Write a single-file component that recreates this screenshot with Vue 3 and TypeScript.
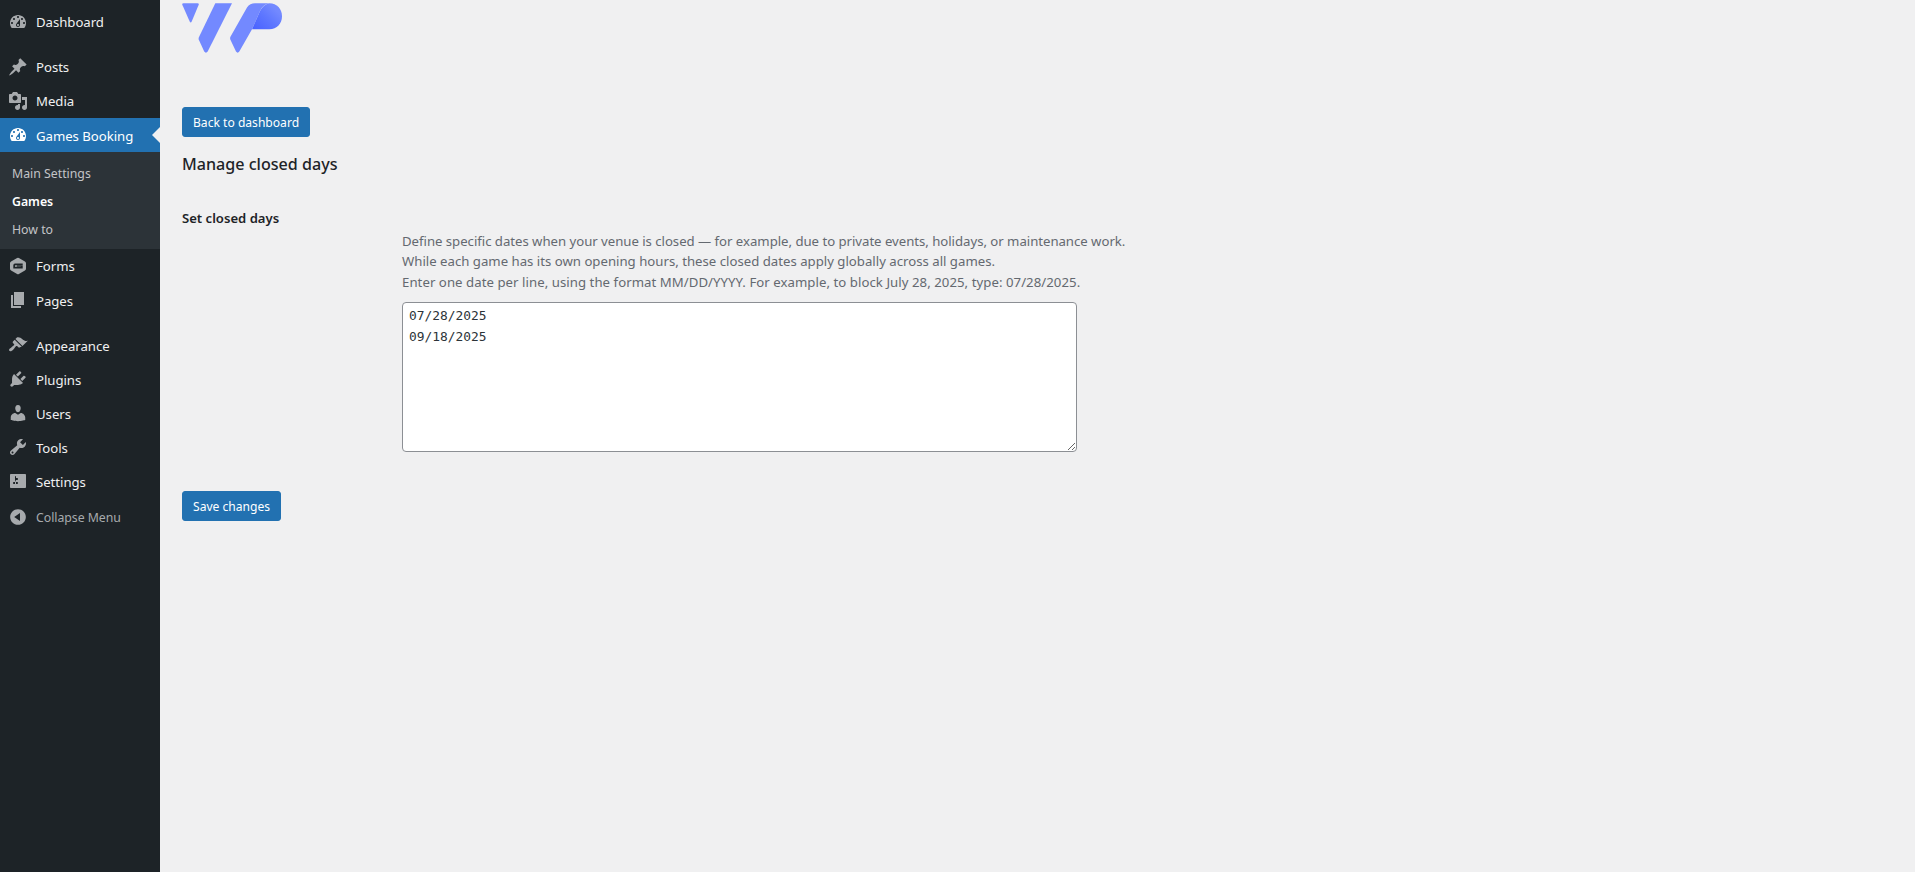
<script setup lang="ts">
interface MenuItem { label: string; path: string }
const dashboard = "M3.76 16h12.48c1.1-1.37 1.76-3.11 1.76-5 0-4.42-3.58-8-8-8s-8 3.58-8 8c0 1.89.66 3.63 1.76 5zM10 4c.55 0 1 .45 1 1s-.45 1-1 1-1-.45-1-1 .45-1 1-1zM6 6c.55 0 1 .45 1 1s-.45 1-1 1-1-.45-1-1 .45-1 1-1zm8 0c.55 0 1 .45 1 1s-.45 1-1 1-1-.45-1-1 .45-1 1-1zm-5.37 5.55L12 7v6c0 1.1-.9 2-2 2s-2-.9-2-2c0-.57.24-1.08.63-1.45zM4 10c.55 0 1 .45 1 1s-.45 1-1 1-1-.45-1-1 .45-1 1-1zm12 0c.55 0 1 .45 1 1s-.45 1-1 1-1-.45-1-1 .45-1 1-1zm-5 3c0-.55-.45-1-1-1s-1 .45-1 1 .45 1 1 1 1-.45 1-1z"
const groupA: MenuItem[] = [
  { label: 'Posts', path: 'M10.44 3.02l1.82-1.82 6.36 6.35-1.83 1.82c-1.05-.68-2.48-.57-3.41.36l-.75.75c-.92.93-1.04 2.35-.35 3.41l-1.83 1.82-2.41-2.41-2.8 2.79c-.42.42-3.38 2.71-3.8 2.29s1.86-3.39 2.28-3.81l2.79-2.79L4.1 9.36l1.83-1.82c1.05.69 2.48.57 3.4-.36l.75-.75c.93-.92 1.05-2.35.36-3.41z' },
  { label: 'Media', path: 'M13 11V4c0-.55-.45-1-1-1h-1.67L9 1H5L3.67 3H2c-.55 0-1 .45-1 1v7c0 .55.45 1 1 1h10c.55 0 1-.45 1-1zM7 4.5c1.38 0 2.5 1.12 2.5 2.5S8.38 9.5 7 9.5 4.5 8.38 4.5 7 5.62 4.5 7 4.5zM14 6h5v10.5c0 1.38-1.12 2.5-2.5 2.5S14 17.88 14 16.5s1.12-2.5 2.5-2.5c.17 0 .34.02.5.05V9h-3V6zm-4 8.05V13h2v3.5c0 1.38-1.12 2.5-2.5 2.5S7 17.88 7 16.5 8.12 14 9.5 14c.17 0 .34.02.5.05z' },
]
const groupB: MenuItem[] = [
  { label: 'Appearance', path: 'M14.48 11.06L7.41 3.99l1.5-1.5c.5-.56 2.3-.47 3.51.32 1.21.8 1.43 1.28 2.91 2.1 1.18.64 2.45 1.26 4.45.85zm-.71.71L6.7 4.7 4.93 6.47c-.39.39-.39 1.02 0 1.41l1.06 1.06c.39.39.39 1.03 0 1.42-.6.6-1.43 1.11-2.21 1.69-.35.26-.7.53-1.01.84C1.43 13.23.4 14.87 1.4 15.87c.99 1 2.64-.03 3.98-1.37.31-.31.59-.66.85-1.01.58-.78 1.09-1.61 1.69-2.21.39-.39 1.02-.39 1.41 0l1.06 1.06c.39.39 1.02.39 1.41 0z' },
  { label: 'Plugins', path: 'M13.11 4.36L9.87 7.6 8 5.73l3.24-3.24c.35-.34 1.05-.2 1.56.32.52.51.66 1.21.31 1.55zm-8 1.77l.91-1.12 9.01 9.01-1.19.84c-.71.71-2.63 1.16-3.82 1.16H6.14L4.9 17.26c-.59.59-1.54.59-2.12 0-.59-.58-.59-1.53 0-2.12l1.24-1.24v-3.88c0-1.13.4-3.19 1.09-3.89zm7.26 3.97l3.24-3.24c.34-.35 1.04-.21 1.55.31.52.51.66 1.21.31 1.55l-3.24 3.25z' },
  { label: 'Users', path: 'M10 9.25c-2.27 0-2.73-3.44-2.73-3.44C7 4.02 7.82 2 9.97 2c2.16 0 2.98 2.02 2.71 3.81 0 0-.41 3.44-2.68 3.44zm0 2.57L12.72 10c2.39 0 4.52 2.33 4.52 4.53v2.49s-3.65 1.13-7.24 1.13c-3.65 0-7.24-1.13-7.24-1.13v-2.49c0-2.25 1.94-4.48 4.47-4.48z' },
  { label: 'Tools', path: 'M16.68 9.77c-1.34 1.34-3.3 1.67-4.95.99l-5.41 6.52c-.99.99-2.59.99-3.58 0s-.99-2.59 0-3.57l6.52-5.42c-.68-1.65-.35-3.61.99-4.95 1.28-1.28 3.12-1.62 4.72-1.06l-2.89 2.89 2.82 2.82 2.86-2.87c.53 1.58.18 3.39-1.08 4.65zM3.81 16.21c.4.39 1.04.39 1.43 0 .4-.4.4-1.04 0-1.43-.39-.4-1.03-.4-1.43 0-.39.39-.39 1.03 0 1.43z' },
  { label: 'Settings', path: 'M18 16V4c0-.55-.45-1-1-1H3c-.55 0-1 .45-1 1v12c0 .55.45 1 1 1h14c.55 0 1-.45 1-1zM8 11h1c.55 0 1 .45 1 1s-.45 1-1 1H8v1.5c0 .28-.22.5-.5.5s-.5-.22-.5-.5V13H6c-.55 0-1-.45-1-1s.45-1 1-1h1V5.5c0-.28.22-.5.5-.5s.5.22.5.5V7h1c.55 0 1 .45 1 1s-.45 1-1 1h-1v5.5c0 .28-.22.5-.5.5s-.5-.22-.5-.5V9z' },
]
const pages = 'M6 15V2h10v13H6zm-1 1h8v2H3V5h2v11z'
const forms = 'M10.9 1.9 16.9 5.4Q18 6 18 7.2V12.800Q18 14 16.900 14.600L10.900 18.100Q10 18.600 9.100 18.100L3.100 14.600Q2 14 2 12.800V7.200Q2 6 3.100 5.400L9.100 1.900Q10 1.400 10.900 1.900ZM7 7.500Q5.400 7.500 5.300 9.200V12.500H14.700V9.300H8.600V10.700H12.800V11.100H7.200V9.500Q7.200 9 7.800 9H14.700V7.500Z'
const collapse = 'M10 2.16c4.33 0 7.84 3.51 7.84 7.84s-3.51 7.84-7.84 7.84S2.16 14.33 2.16 10 5.71 2.16 10 2.16zm2 11.72V6.12L6.18 9.97z'
const dates = '07/28/2025\n09/18/2025'
</script>

<template>
  <div class="admin">
    <aside class="sidebar">
      <a class="item raised">
        <svg class="icon" viewBox="0 0 20 20"><path fill-rule="evenodd" :d="dashboard" /></svg>
        <span>Dashboard</span>
      </a>
      <div class="sep"></div>
      <a v-for="m in groupA" :key="m.label" class="item raised">
        <svg class="icon" viewBox="0 0 20 20"><path :d="m.path" /></svg>
        <span>{{ m.label }}</span>
      </a>
      <a class="item current">
        <svg class="icon" viewBox="0 0 20 20"><path fill-rule="evenodd" :d="dashboard" /></svg>
        <span>Games Booking</span>
        <i class="arrow"></i>
      </a>
      <div class="submenu">
        <a class="subitem">Main Settings</a>
        <a class="subitem active">Games</a>
        <a class="subitem">How to</a>
      </div>
      <a class="item raised">
        <svg class="icon" viewBox="0 0 20 20"><path fill-rule="evenodd" :d="forms" /></svg>
        <span>Forms</span>
      </a>
      <a class="item">
        <svg class="icon" viewBox="0 0 20 20"><path :d="pages" /></svg>
        <span>Pages</span>
      </a>
      <div class="sep"></div>
      <a v-for="m in groupB" :key="m.label" class="item">
        <svg class="icon" viewBox="0 0 20 20"><path :d="m.path" /></svg>
        <span>{{ m.label }}</span>
      </a>
      <a class="item collapse">
        <svg class="icon" viewBox="0 0 20 20"><path :d="collapse" /></svg>
        <span>Collapse Menu</span>
      </a>
    </aside>

    <main class="content">
      <svg class="logo" viewBox="0 0 102 50" aria-label="Logo">
        <defs>
          <linearGradient id="pbowl" x1="0.05" y1="0.95" x2="0.8" y2="0.25">
            <stop offset="0" stop-color="#4a63ff" />
            <stop offset="0.6" stop-color="#5f78ff" />
            <stop offset="1" stop-color="#7389ff" />
          </linearGradient>
        </defs>
        <path fill="#7389ff" d="M1.5 .3H15.500Q17.300 .3 16.600 2L9.700 18.500Q8.700 20.500 7.700 18.500L.4 2Q-.3 .3 1.500 .3Z" />
        <path fill="#7389ff" d="M33.300 .3H50L25.700 48.500Q24 50.800 22.200 48.500L16.700 36.500Q16.400 35.300 17 34Z" />
        <path fill="#7389ff" d="M48.300 34 65 4.500Q68 .3 73 .3H87.300Q80.500 2 78 8L70 26.300 57.300 48.500Q55.700 50.800 54 48.500L48.300 36.500Q47.900 35.300 48.300 34Z" />
        <path fill="url(#pbowl)" d="M87.300 .3C95 .3 100 6 100 13.300S95 26.300 87.300 26.300H70L78 8Q81 2 87.300 .3Z" />
      </svg>

      <a class="btn back">Back to dashboard</a>
      <h2 class="title">Manage closed days</h2>

      <div class="field">
        <h3 class="label">Set closed days</h3>
        <div class="control">
          <p class="desc">Define specific dates when your venue is closed — for example, due to private events, holidays, or maintenance work.</p>
          <p class="desc">While each game has its own opening hours, these closed dates apply globally across all games.</p>
          <p class="desc">Enter one date per line, using the format MM/DD/YYYY. For example, to block July 28, 2025, type: 07/28/2025.</p>
          <textarea class="dates" :value="dates" spellcheck="false"></textarea>
        </div>
      </div>

      <a class="btn save">Save changes</a>
    </main>
  </div>
</template>

<style>
html, body { margin: 0; background: #f0f0f1; }
</style>

<style scoped>
.admin {
  display: flex;
  min-height: 872px;
  font-family: "Noto Sans", "Open Sans", sans-serif;
  font-size: 13px;
  color: #1d2327;
  overflow: hidden;
}
.sidebar {
  width: 160px;
  flex: none;
  background: #1d2327;
  padding-top: 5px;
  box-sizing: border-box;
}
.item {
  position: relative;
  display: flex;
  align-items: center;
  height: 34px;
  color: #f0f0f1;
  font-size: 13.2px;
  letter-spacing: -0.04px;
}
.item span { margin-left: 8px; padding-top: 1px; }
.item.raised span { padding-top: 0; }
.icon {
  width: 20px;
  height: 20px;
  margin-left: 8px;
  fill: #a7aaad;
  flex: none;
}
.sep { height: 11px; }
.current { background: #2271b1; color: #fff; }
.current .icon { fill: #fff; }
.arrow {
  position: absolute;
  right: 0;
  top: 50%;
  margin-top: -8px;
  border: 8px solid transparent;
  border-right-color: #f0f0f1;
  border-left-width: 0;
}
.submenu {
  background: #2c3338;
  padding: 8px 0 0;
  height: 97px;
  box-sizing: border-box;
}
.subitem {
  display: block;
  height: 28px;
  line-height: 28px;
  padding-left: 12px;
  color: #c3c4c7;
  font-size: 12.3px;
}
.active { color: #fff; font-weight: 600; }
.collapse { color: #a7aaad; font-size: 12.3px; margin-top: 2px; }
.content {
  flex: 1;
  padding: 3px 0 0 22px;
  min-width: 0;
}
.logo {
  display: block;
  width: 102px;
  height: 50px;
}
.btn {
  display: block;
  width: max-content;
  box-sizing: border-box;
  height: 30px;
  line-height: 29px;
  padding: 0 10px;
  background: #2271b1;
  border: 1px solid #2271b1;
  border-radius: 3px;
  color: #fff;
  font-size: 12.1px;
}
.back { margin-top: 54px; }
.title {
  margin: 14px 0 0;
  font-size: 16.1px;
  line-height: 27px;
  font-weight: 500;
  color: #1d2327;
}
.field {
  display: flex;
  margin-top: 30px;
}
.label {
  width: 220px;
  flex: none;
  margin: 0;
  font-size: 13.1px;
  line-height: 20px;
  font-weight: 600;
}
.control { padding-top: 22.5px; min-width: 0; }
.desc {
  margin: 0;
  font-size: 13.2px;
  letter-spacing: -0.03px;
  line-height: 20.8px;
  color: #646970;
}
.desc:nth-child(2) { letter-spacing: 0; }
.desc:nth-child(3) { letter-spacing: 0.05px; }
.dates {
  display: block;
  width: 675px;
  height: 150px;
  margin-top: 9.5px;
  padding: 3px 6px;
  box-sizing: border-box;
  border: 1px solid #8c8f94;
  border-radius: 4px;
  background: #fff;
  color: #2c3338;
  font-family: "DejaVu Sans Mono", monospace;
  font-size: 12.9px;
  line-height: 20.8px;
  outline: none;
}
.save { margin-top: 39px; }
</style>
